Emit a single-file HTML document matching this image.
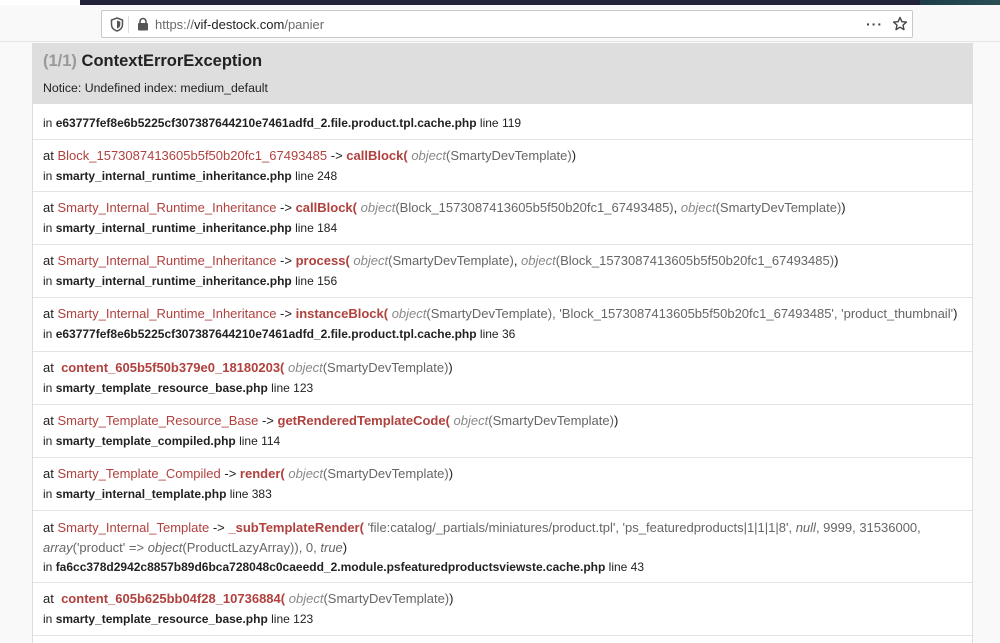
<!DOCTYPE html>
<html><head><meta charset="utf-8"><style>
*{margin:0;padding:0;box-sizing:border-box}
body{width:1000px;height:641px;overflow:hidden;background:#f9f9f9;font-family:"Liberation Sans",Arial,sans-serif;font-size:12px;color:#222;position:relative}
.top{position:absolute;left:0;top:0;width:1000px;height:6px;background:#fff}
.dark{position:absolute;left:80px;top:0;width:840px;height:5px;background:#22223a}
.teal{position:absolute;left:920px;top:0;width:80px;height:5px;background:linear-gradient(90deg,#1d3d4a,#2a4f55)}
.bar{position:absolute;left:0;top:5px;width:1000px;height:37px;background:#f9f9fa;border-bottom:1px solid #e4e4e4}
.url{position:absolute;left:101px;top:10px;width:812px;height:28px;background:#fff;border:1px solid #c8c8c8;border-radius:2px}
.url .t{position:absolute;left:53px;top:6px;font-size:13px;color:#6a6a6a}
.url .t b{font-weight:normal;color:#222}
.panel{position:absolute;left:32px;top:43px;width:941px;height:600px;background:#fff;border-left:1px solid #ddd;border-right:1px solid #ddd}
.head{position:absolute;left:0;top:0;width:100%;height:61px;background:#dedede}
.head h1{position:absolute;left:10px;top:9px;font-size:16.5px;font-weight:bold;color:#222}
.head h1 span{color:#999}
.head p{position:absolute;left:10px;top:38px;font-size:12.3px;color:#222}
.row{position:absolute;left:0;width:100%;border-bottom:1px solid #e4e4e4;padding:6px 10px 0;line-height:20px;white-space:nowrap}
.a{font-size:13px}
.c{color:#b0413e}.f{color:#b0413e;font-weight:bold}.i{color:#888;font-style:italic}.g{color:#666}
.in b{color:#222}
</style></head><body>
<div class="top"></div><div class="dark"></div><div class="teal"></div>
<div class="bar"></div>
<div class="url">
<svg style="position:absolute;left:8px;top:6px" width="14" height="15" viewBox="0 0 14 15"><path d="M7 1 L12.5 3 V7.5 C12.5 11 10 13 7 14 C4 13 1.5 11 1.5 7.5 V3 Z" fill="none" stroke="#555" stroke-width="1.5"/><path d="M7 3.5 V11.5 C9 10.8 10.3 9.5 10.3 7.5 V4.6 Z" fill="#555"/></svg>
<div style="position:absolute;left:26px;top:5px;width:1px;height:17px;background:#ddd"></div>
<svg style="position:absolute;left:35px;top:6px" width="12" height="14" viewBox="0 0 12 14"><path d="M3 6 V4.5 A3 3 0 0 1 9 4.5 V6" fill="none" stroke="#555" stroke-width="1.6"/><rect x="1" y="6" width="10" height="7.5" rx="1" fill="#555"/></svg>
<div class="t">https://<b>vif-destock.com</b>/panier</div>
<div style="position:absolute;left:764px;top:5px;font-size:14px;color:#444;letter-spacing:1px;font-weight:bold">···</div>
<svg style="position:absolute;left:790px;top:5px" width="16" height="16" viewBox="0 0 16 16"><path d="M8 1.5 L9.9 5.7 L14.4 6.1 L11 9.1 L12 13.6 L8 11.2 L4 13.6 L5 9.1 L1.6 6.1 L6.1 5.7 Z" fill="none" stroke="#444" stroke-width="1.4" stroke-linejoin="round"/></svg>
</div>
<div class="panel">
<div class="head"><h1><span>(1/1)</span> ContextErrorException</h1><p>Notice: Undefined index: medium_default</p></div>
<div class="row in" style="top:61px;height:36px;padding-top:9px">in <b>e63777fef8e6b5225cf307387644210e7461adfd_2.file.product.tpl.cache.php</b> line 119</div>
<div class="row in" style="top:97px;height:52px"><span class="a">at <span class="c">Block_1573087413605b5f50b20fc1_67493485</span> -&gt; <span class="f">callBlock(</span> <span class="i">object</span><span class="g">(SmartyDevTemplate)</span>)</span><br>in <b>smarty_internal_runtime_inheritance.php</b> line 248</div>
<div class="row in" style="top:149px;height:53px"><span class="a">at <span class="c">Smarty_Internal_Runtime_Inheritance</span> -&gt; <span class="f">callBlock(</span> <span class="i">object</span><span class="g">(Block_1573087413605b5f50b20fc1_67493485)</span>, <span class="i">object</span><span class="g">(SmartyDevTemplate)</span>)</span><br>in <b>smarty_internal_runtime_inheritance.php</b> line 184</div>
<div class="row in" style="top:202px;height:53px"><span class="a">at <span class="c">Smarty_Internal_Runtime_Inheritance</span> -&gt; <span class="f">process(</span> <span class="i">object</span><span class="g">(SmartyDevTemplate)</span>, <span class="i">object</span><span class="g">(Block_1573087413605b5f50b20fc1_67493485)</span>)</span><br>in <b>smarty_internal_runtime_inheritance.php</b> line 156</div>
<div class="row in" style="top:255px;height:54px"><span class="a">at <span class="c">Smarty_Internal_Runtime_Inheritance</span> -&gt; <span class="f">instanceBlock(</span> <span class="i">object</span><span class="g">(SmartyDevTemplate), 'Block_1573087413605b5f50b20fc1_67493485', 'product_thumbnail'</span>)</span><br>in <b>e63777fef8e6b5225cf307387644210e7461adfd_2.file.product.tpl.cache.php</b> line 36</div>
<div class="row in" style="top:309px;height:53px"><span class="a">at &nbsp;<span class="f">content_605b5f50b379e0_18180203(</span> <span class="i">object</span><span class="g">(SmartyDevTemplate)</span>)</span><br>in <b>smarty_template_resource_base.php</b> line 123</div>
<div class="row in" style="top:362px;height:53px"><span class="a">at <span class="c">Smarty_Template_Resource_Base</span> -&gt; <span class="f">getRenderedTemplateCode(</span> <span class="i">object</span><span class="g">(SmartyDevTemplate)</span>)</span><br>in <b>smarty_template_compiled.php</b> line 114</div>
<div class="row in" style="top:415px;height:53px"><span class="a">at <span class="c">Smarty_Template_Compiled</span> -&gt; <span class="f">render(</span> <span class="i">object</span><span class="g">(SmartyDevTemplate)</span>)</span><br>in <b>smarty_internal_template.php</b> line 383</div>
<div class="row in" style="top:468px;height:72px;line-height:19px;padding-top:7px"><span class="a">at <span class="c">Smarty_Internal_Template</span> -&gt; <span class="f">_subTemplateRender(</span> <span class="g">'file:catalog/_partials/miniatures/product.tpl', 'ps_featuredproducts|1|1|1|8', <i>null</i>, 9999, 31536000,</span><br><span class="g"><i>array</i>('product' =&gt; <i>object</i>(ProductLazyArray)), 0, <i>true</i></span>)</span><br>in <b>fa6cc378d2942c8857b89d6bca728048c0caeedd_2.module.psfeaturedproductsviewste.cache.php</b> line 43</div>
<div class="row in" style="top:540px;height:53px"><span class="a">at &nbsp;<span class="f">content_605b625bb04f28_10736884(</span> <span class="i">object</span><span class="g">(SmartyDevTemplate)</span>)</span><br>in <b>smarty_template_resource_base.php</b> line 123</div>
</div>
</body></html>
